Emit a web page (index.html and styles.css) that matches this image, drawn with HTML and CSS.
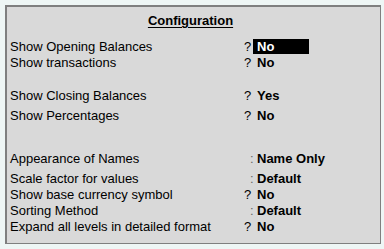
FILE: index.html
```html
<!DOCTYPE html>
<html>
<head>
<meta charset="utf-8">
<title>Configuration</title>
<link rel="stylesheet" href="styles.css">
</head>
<body>
    <div class="panel">
        <div class="title"><span>Configuration</span></div>
        <div class="rows">
            <div class="row">
                <span class="label">Show Opening Balances</span>
                <span class="mark">?</span>
                <span class="value"><span class="current">No</span></span>
            </div>
            <div class="row">
                <span class="label">Show transactions</span>
                <span class="mark">?</span>
                <span class="value">No</span>
            </div>
            <div class="row gap-lg">
                <span class="label">Show Closing Balances</span>
                <span class="mark">?</span>
                <span class="value">Yes</span>
            </div>
            <div class="row gap-sm">
                <span class="label">Show Percentages</span>
                <span class="mark">?</span>
                <span class="value">No</span>
            </div>
            <div class="row gap-xl">
                <span class="label">Appearance of Names</span>
                <span class="mark colon">:</span>
                <span class="value">Name Only</span>
            </div>
            <div class="row gap-sm">
                <span class="label">Scale factor for values</span>
                <span class="mark colon">:</span>
                <span class="value">Default</span>
            </div>
            <div class="row">
                <span class="label">Show base currency symbol</span>
                <span class="mark">?</span>
                <span class="value">No</span>
            </div>
            <div class="row">
                <span class="label">Sorting Method</span>
                <span class="mark colon">:</span>
                <span class="value">Default</span>
            </div>
            <div class="row">
                <span class="label">Expand all levels in detailed format</span>
                <span class="mark">?</span>
                <span class="value">No</span>
            </div>
        </div>
    </div>
</body>
</html>
```

FILE: styles.css
```css
* {
  font-family: "Liberation Sans", Arial, sans-serif;
}
html, body {
  height: 100%;
}
body {
  margin: 0;
  padding: 5px 3px 5px 5px;
  box-sizing: border-box;
  background: #eef6f5;
  color: #000;
  font-size: 13px;
}
.panel {
  height: 239px;
  box-sizing: border-box;
  background: #d9d9d9;
  border: 1px solid #7f7f7f;
  border-top-width: 2px;
  border-left-width: 2px;
  padding: 6px 0 0 3px;
}
.title {
  text-align: center;
  font-weight: bold;
  line-height: 16px;
  margin-bottom: 10px;
  padding-right: 9px;
}
.title span {
  text-decoration: underline;
  text-underline-offset: 2px;
}
.row {
  display: grid;
  grid-template-columns: 234px 13px 1fr;
  line-height: 16px;
  height: 16px;
}
.gap-sm {
  margin-top: 4px;
}
.gap-lg {
  margin-top: 17px;
}
.gap-xl {
  margin-top: 27px;
}
.mark.colon {
  color: #666;
  padding-left: 6px;
}
.value {
  font-weight: bold;
}
.current {
  display: inline-block;
  width: 52px;
  height: 15px;
  background: #000;
  color: #fff;
  padding-left: 4px;
  margin-left: -4px;
}
```
